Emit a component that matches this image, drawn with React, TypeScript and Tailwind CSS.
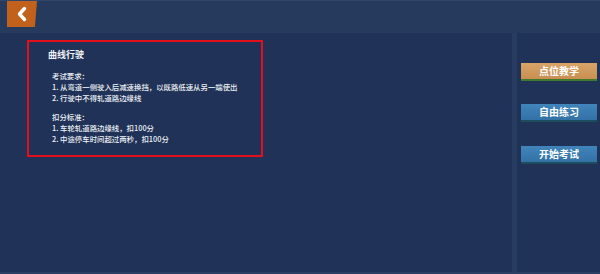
import React from "react";

const FONT = { fontFamily: '"Noto Sans CJK SC", "Noto Sans", sans-serif' };

const 要求 = ["1. 从弯道一侧驶入后减速换挡，以既路低速从另一端使出", "2. 行驶中不得轧道路边缘线"];
const 扣分 = ["1. 车轮轧道路边缘线，扣100分", "2. 中途停车时间超过两秒，扣100分"];

function MenuButton({ label, tone }: { label: string; tone: "orange" | "blue" }) {
  return (
    <button
      className={
        tone === "orange"
          ? "flex h-[18px] w-[76px] items-center justify-center border-b-2 border-[#3f7a2c] bg-gradient-to-b from-[#d8a468] to-[#c98f52] text-[10px] font-bold leading-none text-white"
          : "flex h-[18px] w-[76px] items-center justify-center border-b-2 border-[#1c4d5c] bg-gradient-to-b from-[#4085bb] to-[#3371a6] text-[10px] font-bold leading-none text-white"
      }
    >
      {label}
    </button>
  );
}

export default function App() {
  return (
    <div className="flex h-[274px] w-[600px] flex-col overflow-hidden bg-[#203257] text-[#eef1f6]" style={FONT}>
      {/* 顶栏 */}
      <div className="flex h-[33px] shrink-0 items-start border-t border-[#31466b] bg-[#263a5d] pl-[7px]">
        <button className="flex h-[26px] w-[30px] items-center justify-center bg-[#c2611c] [clip-path:polygon(0_0,100%_0,93%_100%,0_100%)]">
          <svg width="14" height="16" viewBox="0 0 14 16">
            <polyline points="9.5,2.5 4.5,8 9.5,13.5" fill="none" stroke="white" strokeWidth="3.4" strokeLinecap="round" strokeLinejoin="round" />
          </svg>
        </button>
      </div>

      <div className="flex flex-1">
        <div className="flex-1 pl-[27px] pt-[7px]">
          <div className="h-[117px] w-[236px] border-2 border-[#e3101b] pl-[19px] pt-[6px]">
            <div className="text-[9px] font-bold leading-[14px]">曲线行驶</div>
            <div className="mt-[8px] pl-[4px] text-[7.4px] font-medium leading-[11px]">
              <div>考试要求：</div>
              {要求.map((t) => (
                <div key={t}>{t}</div>
              ))}
              <div className="mt-[8px]">扣分标准：</div>
              {扣分.map((t) => (
                <div key={t}>{t}</div>
              ))}
            </div>
          </div>
        </div>

        <div className="flex w-[88px] shrink-0 flex-col border-l-[5px] border-[#283b61] pl-[4px] pt-[30px]">
          <MenuButton label="点位教学" tone="orange" />
          <div className="mt-[23px]">
            <MenuButton label="自由练习" tone="blue" />
          </div>
          <div className="mt-[24px]">
            <MenuButton label="开始考试" tone="blue" />
          </div>
        </div>
      </div>
      <div className="h-[2px] shrink-0 bg-[#2b3e63]" />
    </div>
  );
}
